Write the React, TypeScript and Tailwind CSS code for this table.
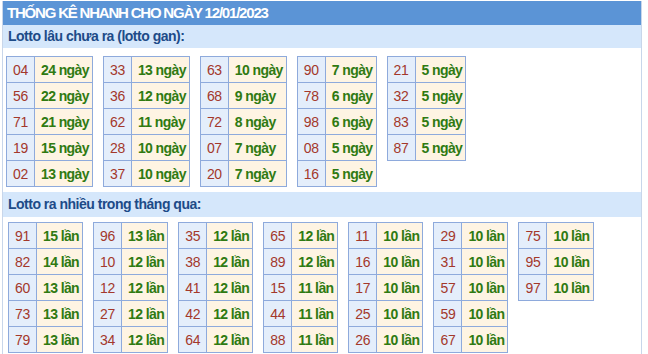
import React from 'react';

type Row = [string, string];

const gan: Row[][] = [
  [['04', '24 ngày'], ['56', '22 ngày'], ['71', '21 ngày'], ['19', '15 ngày'], ['02', '13 ngày']],
  [['33', '13 ngày'], ['36', '12 ngày'], ['62', '11 ngày'], ['28', '10 ngày'], ['37', '10 ngày']],
  [['63', '10 ngày'], ['68', '9 ngày'], ['72', '8 ngày'], ['07', '7 ngày'], ['20', '7 ngày']],
  [['90', '7 ngày'], ['78', '6 ngày'], ['98', '6 ngày'], ['08', '5 ngày'], ['16', '5 ngày']],
  [['21', '5 ngày'], ['32', '5 ngày'], ['83', '5 ngày'], ['87', '5 ngày']],
];

const nhieu: Row[][] = [
  [['91', '15 lần'], ['82', '14 lần'], ['60', '13 lần'], ['73', '13 lần'], ['79', '13 lần']],
  [['96', '13 lần'], ['10', '12 lần'], ['12', '12 lần'], ['27', '12 lần'], ['34', '12 lần']],
  [['35', '12 lần'], ['38', '12 lần'], ['41', '12 lần'], ['42', '12 lần'], ['64', '12 lần']],
  [['65', '12 lần'], ['89', '12 lần'], ['15', '11 lần'], ['44', '11 lần'], ['88', '11 lần']],
  [['11', '10 lần'], ['16', '10 lần'], ['17', '10 lần'], ['25', '10 lần'], ['26', '10 lần']],
  [['29', '10 lần'], ['31', '10 lần'], ['57', '10 lần'], ['59', '10 lần'], ['67', '10 lần']],
  [['75', '10 lần'], ['95', '10 lần'], ['97', '10 lần']],
];

function LotoTable({ rows }: { rows: Row[] }) {
  return (
    <table className="border-collapse">
      <tbody>
        {rows.map(([num, val]) => (
          <tr key={num} className="h-[26px]">
            <td className="border border-[#8eaadc] bg-[#e4eefb] px-[6px] text-[14px] tracking-[-0.3px] text-[#a3382b] leading-none">
              {num}
            </td>
            <td className="border border-[#8eaadc] bg-[#fef4e3] pl-[6px] pr-[3px] text-[14px] tracking-[-0.6px] font-bold text-[#2f7a12] leading-none">
              {val}
            </td>
          </tr>
        ))}
      </tbody>
    </table>
  );
}

export default function App() {
  return (
    <div className="w-[648px] h-[354px] bg-white overflow-hidden pl-[2px] font-['Liberation_Sans',Arial,sans-serif]">
      <div className="w-[640px] h-full border-x border-[#c8d6ea]">
        {/* header */}
        <div className="mt-[1px] h-[24px] bg-[#5b94d6] flex items-center pl-[4px]">
          <span className="text-white font-bold text-[15px] tracking-[-1.2px]">
            THỐNG KÊ NHANH CHO NGÀY 12/01/2023
          </span>
        </div>

        {/* lotto gan */}
        <div className="h-[23px] bg-[#d5e7fb] flex items-center pl-[5px]">
          <span className="text-[14px] font-bold tracking-[-0.5px] text-[#1d4b88]">Lotto lâu chưa ra (lotto gan):</span>
        </div>
        <div className="flex items-start gap-[10px] pl-[3px] pt-[8px]">
          {gan.map((t, i) => (
            <LotoTable key={i} rows={t} />
          ))}
        </div>

        {/* lotto ra nhieu */}
        <div className="mt-[5px] h-[25px] bg-[#d5e7fb] flex items-center pl-[5px]">
          <span className="text-[14px] font-bold tracking-[-0.5px] text-[#1d4b88]">Lotto ra nhiều trong tháng qua:</span>
        </div>
        <div className="flex items-start gap-[10px] pl-[5px] pt-[5px]">
          {nhieu.map((t, i) => (
            <LotoTable key={i} rows={t} />
          ))}
        </div>
      </div>
    </div>
  );
}
